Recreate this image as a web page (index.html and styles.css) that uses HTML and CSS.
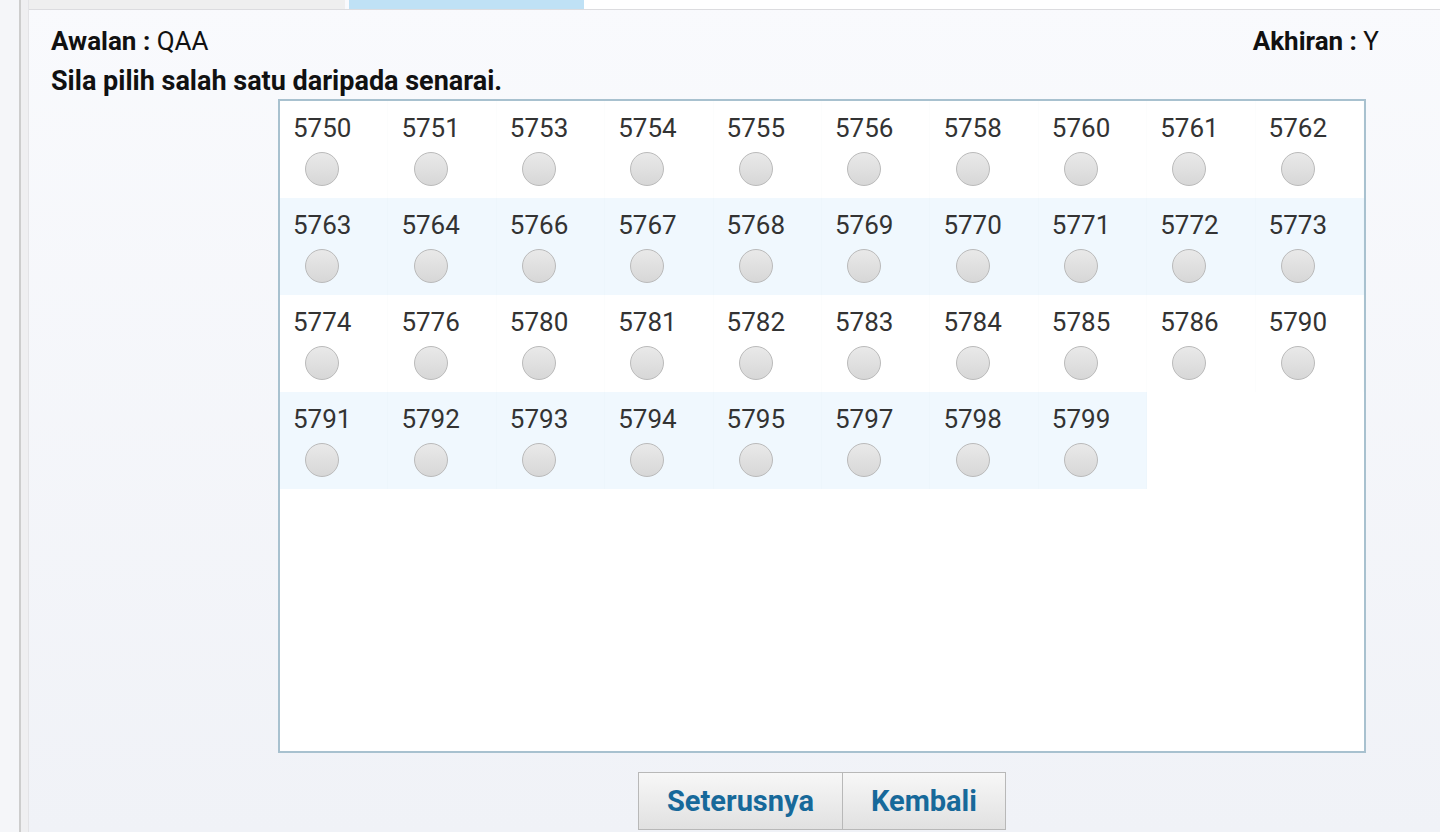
FILE: index.html
```html
<!DOCTYPE html>
<html lang="ms">
<head>
    <meta charset="UTF-8">
    <meta name="viewport" content="width=device-width, initial-scale=1.0">
    <title>Pilih Nombor</title>
    <link rel="stylesheet" href="styles.css">
</head>
<body>
    <div class="frame">
        <div class="panel">
            <div class="tabs">
                <div class="tab"></div>
                <div class="tab active"></div>
                <div class="tab-rest"></div>
            </div>

            <div class="content">
                <div class="info">
                    <div><b>Awalan :</b> QAA</div>
                    <div><b>Akhiran :</b> Y</div>
                </div>
                <p class="prompt">Sila pilih salah satu daripada senarai.</p>

                <div class="list-box">
                    <div class="grid" id="numGrid">
                        <!-- nombor diisi oleh skrip -->
                    </div>
                </div>

                <div class="actions">
                    <button class="btn">Seterusnya</button>
                    <button class="btn">Kembali</button>
                </div>
            </div>
        </div>
    </div>

    <script>
        const numbers = [
            5750, 5751, 5753, 5754, 5755, 5756, 5758, 5760, 5761, 5762,
            5763, 5764, 5766, 5767, 5768, 5769, 5770, 5771, 5772, 5773,
            5774, 5776, 5780, 5781, 5782, 5783, 5784, 5785, 5786, 5790,
            5791, 5792, 5793, 5794, 5795, 5797, 5798, 5799
        ];

        const grid = document.getElementById('numGrid');
        numbers.forEach((num, i) => {
            const row = Math.floor(i / 10);
            const cell = document.createElement('div');
            cell.className = row % 2 === 1 ? 'cell alt' : 'cell';
            cell.innerHTML = `
                <label class="pick">
                    <span class="num">${num}</span>
                    <input type="radio" name="nombor" value="${num}">
                </label>
            `;
            grid.appendChild(cell);
        });
    </script>
</body>
</html>
```

FILE: styles.css
```css
* {
    margin: 0;
    padding: 0;
    box-sizing: border-box;
}

html, body {
    height: 100%;
}

body {
    font-family: Roboto, "Liberation Sans", Arial, sans-serif;
    background-color: #f5f6f9;
    color: #111;
    overflow: hidden;
}

.frame {
    margin-left: 19px;
    height: 100%;
    border-left: 2px solid #cdcdcd;
    padding-left: 7px;
    background-color: #efeff1;
}

.panel {
    height: 100%;
    border-left: 1px solid #e3e3e6;
    background: linear-gradient(#f9fafd, #f0f2f7);
}

.tabs {
    display: flex;
    height: 10px;
    border-bottom: 1px solid #dcdcdf;
}

.tab {
    width: 316px;
    background-color: #efefef;
}

.tab.active {
    width: 235px;
    margin-left: 4px;
    background-color: #bfe1f5;
}

.tab-rest {
    flex: 1;
    background-color: #fff;
}

.content {
    padding: 15px 61px 0 22px;
}

.info {
    display: flex;
    justify-content: space-between;
    font-size: 26px;
    line-height: 32px;
}

.prompt {
    font-size: 27px;
    font-weight: bold;
    line-height: 32px;
    margin-top: 8px;
}

.list-box {
    margin: 2px 0 0 227px;
    width: 1088px;
    height: 654px;
    border: 2px solid #a8c1cf;
    background-color: #fff;
}

.grid {
    display: grid;
    grid-template-columns: repeat(10, 1fr);
}

.cell {
    height: 97px;
    padding: 12px 0 0 13px;
    border-right: 1px solid rgba(0, 60, 120, 0.012);
}

.cell.alt {
    background-color: #f0f8fe;
}

.pick {
    display: inline-flex;
    flex-direction: column;
    align-items: center;
    cursor: pointer;
}

.num {
    font-size: 26px;
    line-height: 30px;
    color: #333;
}

.pick input[type="radio"] {
    appearance: none;
    -webkit-appearance: none;
    width: 34px;
    height: 34px;
    margin-top: 9px;
    border-radius: 50%;
    border: 1px solid #bababa;
    background: linear-gradient(#e9e9e9, #d7d7d7);
}

.actions {
    display: flex;
    justify-content: center;
    margin: 19px 0 0 227px;
    width: 1088px;
}

.btn {
    font-family: Roboto, "Liberation Sans", Arial, sans-serif;
    font-size: 29px;
    font-weight: bold;
    color: #17699a;
    height: 58px;
    padding: 0 28px;
    border: 1px solid #b8b8b8;
    background: linear-gradient(#f7f7f7, #e1e1e1);
    cursor: pointer;
}

.btn + .btn {
    border-left: none;
}
```
